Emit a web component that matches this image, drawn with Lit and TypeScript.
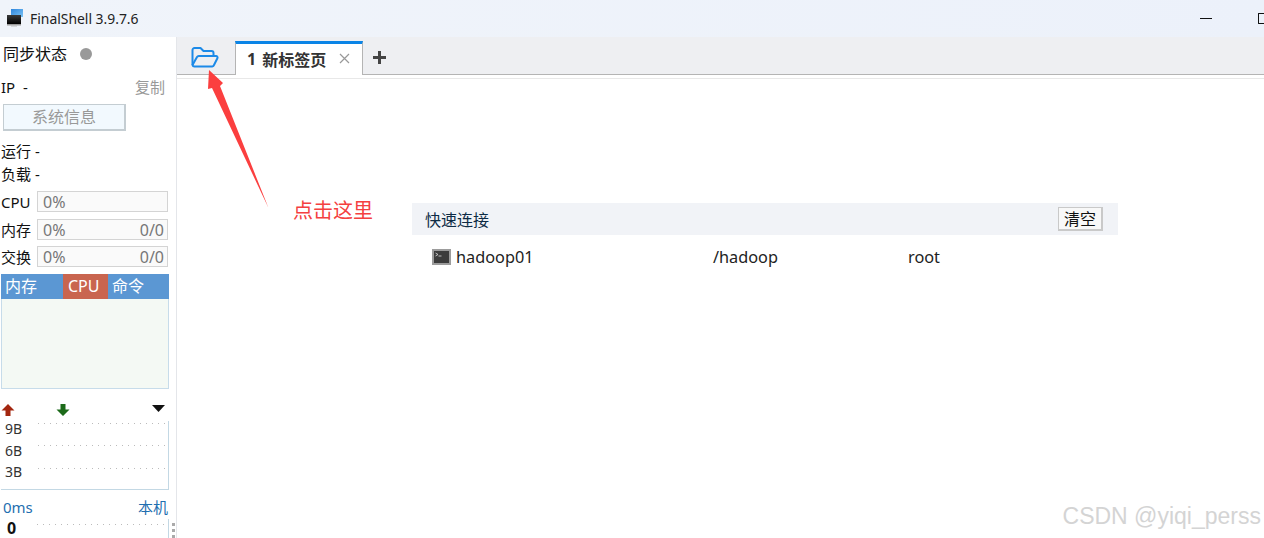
import { LitElement, html, css, svg } from "lit";
import { customElement } from "lit/decorators.js";

@customElement("app-root")
export class AppRoot extends LitElement {
  static styles = css`
    :host { display: block; width: 1264px; height: 538px; overflow: hidden; position: relative; background: #fff; font-family: "Noto Sans", "Noto Sans CJK SC", sans-serif; color: #111; font-size: 15px; }
    .title { height: 37px; background: linear-gradient(90deg, #f0f4fa, #ecf1fa); display: flex; align-items: center; padding-left: 6px; box-sizing: border-box; }
    .logo { width: 18px; height: 19px; margin-right: 6px; }
    .title-text { font-size: 13.9px; color: #222; }
    .spacer { flex: 1; }
    .min { width: 12px; height: 1px; background: #111; margin-right: 46px; margin-top: -1px; }
    .max { width: 6px; height: 11px; border: 1px solid #111; border-right: 0; border-radius: 1px 0 0 1px; box-sizing: border-box; }
    .body { display: flex; height: 501px; }
    .side { width: 177px; box-sizing: border-box; border-right: 1px solid #e4e6ea; position: relative; flex: none; }
    .row { display: flex; align-items: center; padding-left: 1px; line-height: 20px; height: 20px; }
    .sync { padding-left: 3px; margin-top: 7px; font-size: 16px; }
    .dot { width: 12px; height: 12px; border-radius: 50%; background: #999; margin-left: 13px; }
    .ip { margin-top: 13px; width: 164px; justify-content: space-between; }
    .gray { color: #999; }
    .sysbtn { display: block; margin: 7px 0 0 3px; width: 123px; height: 27px; box-sizing: border-box; border: 1px solid #c4cdd2; border-width: 1px 2px 2px 1px; background: #f2f9fe; color: #999; text-align: center; line-height: 24px; font-size: 16px; }
    .r1 { margin-top: 10px; }
    .r2 { margin-top: 3px; }
    .meter { display: flex; padding-left: 1px; margin-top: 7px; height: 21px; align-items: center; }
    .meter > span:first-child { width: 36px; flex: none; }
    .meter.third { margin-top: 6px; }
    .bar { width: 131px; height: 21px; box-sizing: border-box; border: 1px solid #d4d4d4; background: #fafafa; color: #777; display: flex; justify-content: space-between; padding: 0 3px 0 5px; line-height: 21px; font-size: 16px; }
    .tabs3 { margin: 7px 0 0 1px; width: 168px; height: 25px; background: #5b97d3; display: flex; color: #fff; line-height: 25px; font-size: 16px; }
    .tabs3 span { box-sizing: border-box; padding-left: 4px; }
    .t1 { width: 62px; }
    .t2 { width: 45px; background: #c9654f; padding-left: 5px !important; }
    .panel { margin-left: 1px; width: 168px; height: 90px; box-sizing: border-box; background: #f4f9f4; border: 1px solid #c7dcea; border-top: 0; }
    .arrows { display: flex; align-items: center; height: 14px; margin-top: 14px; padding-left: 1px; width: 164px; }
    .arrows svg { display: block; }
    .down { margin-left: 41px; }
    .tri { margin-left: auto; margin-top: -4px; }
    .net { margin-left: 1px; margin-top: 4px; width: 168px; height: 69px; box-sizing: border-box; border: 1px solid #c3d8e4; border-left: 0; border-top: 0; display: grid; grid-template-rows: 22px 23px 23px; padding-top: 1px; }
    .net .l { display: flex; font-size: 14px; color: #333; align-items: flex-start; padding-left: 4px; height: 100%; }
    .net .l b { font-weight: 400; width: 33px; flex: none; line-height: 15px; margin-top: -1px; }
    .net .l:last-child b { margin-top: -3px; }
    .net .l i { flex: 1; height: 1px; margin-top: 1px; margin-right: 3px; background: repeating-linear-gradient(90deg, #bbb 0 1px, transparent 1px 6px); }
    .ping { display: flex; justify-content: space-between; width: 168px; margin-top: 8px; padding-left: 3px; box-sizing: border-box; color: #1f6fb0; height: 19px; line-height: 19px; }
    .last { display: flex; margin-left: 1px; width: 168px; height: 20px; box-sizing: border-box; border-right: 1px solid #c3d8e4; padding-left: 6px; margin-top: 2px; }
    .last b { font-size: 16px; width: 30px; flex: none; line-height: 18px; color: #111; }
    .last i { flex: 1; height: 1px; margin-top: 5px; margin-right: 3px; background: repeating-linear-gradient(90deg, #bbb 0 1px, transparent 1px 6px); }
    .handle { position: absolute; left: 172px; bottom: 0; display: flex; flex-direction: column; gap: 3px; }
    .handle span { width: 3px; height: 3px; background: #aaa; }
    .main { flex: 1; display: flex; flex-direction: column; }
    .tabbar { height: 38px; background: #eeeff2; border-bottom: 1px solid #b4b4b4; box-sizing: border-box; display: flex; align-items: flex-end; flex: none; }
    .open { width: 58px; height: 37px; box-sizing: border-box; padding: 10px 0 0 14px; flex: none; }
    .tab { width: 128px; height: 34px; margin-bottom: -1px; box-sizing: border-box; background: #fff; border-top: 3px solid #0a84e6; border-left: 1px solid #b4b4b4; border-right: 1px solid #b4b4b4; display: flex; align-items: center; padding: 0 0 2px 11px; font-weight: 700; font-size: 16px; color: #333; }
    .tab .n { margin-right: 6px; }
    .tab .x { margin-left: 13px; width: 11px; height: 11px; }
    .plus { margin-left: 10px; width: 13px; height: 13px; margin-bottom: 10px; }
    .sep { height: 1px; margin-top: 3px; background: #e8e8e8; flex: none; }
    .quick { margin: 124px 0 0 235px; width: 706px; height: 32px; background: #f1f3f7; display: flex; align-items: center; justify-content: space-between; padding: 0 15px 0 13px; box-sizing: border-box; color: #0d2b45; font-size: 16px; }
    .quick > span:first-child { margin-top: -1px; }
    .clear { width: 45px; height: 24px; box-sizing: border-box; border: 1px solid #c9c9c9; border-width: 1px 2px 2px 1px; background: #f8f8f8; color: #111; font-size: 16px; text-align: center; line-height: 23px; }
    .conn { margin: 11px 0 0 255px; display: flex; align-items: center; height: 22px; font-size: 16.3px; color: #222; }
    .conn svg { margin-right: 5px; flex: none; }
    .c1 { width: 257px; }
    .c2 { width: 195px; }
    .over { position: absolute; left: 0; top: 0; pointer-events: none; }
    .note { position: absolute; left: 293px; top: 197px; color: #f44040; font-size: 20px; line-height: 28px; }
    .wm { position: absolute; right: 3px; top: 502px; font-family: "Liberation Sans", sans-serif; font-size: 23px; line-height: 28px; color: #d4d4d4; }
  `;

  private line(label: string) {
    return html`<div class="l"><b>${label}</b><i></i></div>`;
  }

  render() {
    return html`
      <div class="title">
        <svg class="logo" viewBox="0 0 18 19">
          <defs>
            <linearGradient id="lb" x1="0" y1="0" x2="1" y2="1"><stop offset="0" stop-color="#2f86dc"/><stop offset="1" stop-color="#7cc4f5"/></linearGradient>
            <linearGradient id="lk" x1="0" y1="0" x2="0" y2="1"><stop offset="0" stop-color="#3a3a3a"/><stop offset="1" stop-color="#000"/></linearGradient>
          </defs>
          <rect x="5" y="0" width="12" height="8" fill="url(#lb)"/>
          <rect x="1" y="6" width="14" height="9" fill="url(#lk)"/>
          <rect x="1" y="15" width="14" height="1.500" fill="#9a9a9a"/>
          <rect x="5" y="16.500" width="6" height="1" fill="#bbb"/>
        </svg>
        <span class="title-text">FinalShell 3.9.7.6</span>
        <span class="spacer"></span>
        <span class="min"></span>
        <span class="max"></span>
      </div>
      <div class="body">
        <aside class="side">
          <div class="row sync">同步状态<span class="dot"></span></div>
          <div class="row ip"><span>IP&nbsp; -</span><span class="gray">复制</span></div>
          <div class="sysbtn">系统信息</div>
          <div class="row r1">运行 -</div>
          <div class="row r2">负载 -</div>
          <div class="meter"><span>CPU</span><div class="bar"><span>0%</span></div></div>
          <div class="meter"><span>内存</span><div class="bar"><span>0%</span><span>0/0</span></div></div>
          <div class="meter third"><span>交换</span><div class="bar"><span>0%</span><span>0/0</span></div></div>
          <div class="tabs3"><span class="t1">内存</span><span class="t2">CPU</span><span>命令</span></div>
          <div class="panel"></div>
          <div class="arrows">
            <svg width="14" height="12" viewBox="0 0 14 12"><path d="M7 0L13.500 6.500H9.500V12H4.500V6.500H0.500Z" fill="#a3260f"/></svg>
            <svg class="down" width="14" height="12" viewBox="0 0 14 12"><path d="M7 12L13.500 5.500H9.500V0H4.500V5.500H0.500Z" fill="#1c6a1a"/></svg>
            <svg class="tri" width="13" height="7" viewBox="0 0 13 7"><path d="M0 0H13L6.500 7Z" fill="#111"/></svg>
          </div>
          <div class="net">${this.line("9B")}${this.line("6B")}${this.line("3B")}</div>
          <div class="ping"><span>0ms</span><span>本机</span></div>
          <div class="last"><b>0</b><i></i></div>
          <div class="handle"><span></span><span></span><span></span></div>
        </aside>
        <main class="main">
          <div class="tabbar">
            <div class="open">
              <svg width="28" height="21" viewBox="0 0 28 21" fill="none" stroke="#1c8ae8" stroke-width="2" stroke-linejoin="round">
                <path d="M1.500 18V3a2 2 0 0 1 2-2h6l3 3h8a2 2 0 0 1 2 2v3"/>
                <path d="M1.500 18l4.500-8a2 2 0 0 1 1.800-1H25a1.500 1.500 0 0 1 1.400 2.200L23 18a2 2 0 0 1-1.800 1.500H3.500a2 2 0 0 1-2-1.500z"/>
              </svg>
            </div>
            <div class="tab"><span class="n">1</span>新标签页
              <svg class="x" viewBox="0 0 11 11" stroke="#999" stroke-width="1.200"><path d="M1 1L10 10M10 1L1 10"/></svg>
            </div>
            <svg class="plus" viewBox="0 0 13 13"><path d="M5 0H8V5H13V8H8V13H5V8H0V5H5Z" fill="#444"/></svg>
          </div>
          <div class="sep"></div>
          <div class="quick"><span>快速连接</span><span class="clear">清空</span></div>
          <div class="conn">
            <svg width="19" height="16" viewBox="0 0 19 16">
              <rect x="1" y="1" width="17" height="14" fill="#3c3c3c" stroke="#9c9c9c" stroke-width="2"/>
              <path d="M3.500 4L6 5.500L3.500 7M6.500 7H9.500" stroke="#ddd" stroke-width="0.800" fill="none"/>
            </svg>
            <span class="c1">hadoop01</span><span class="c2">/hadoop</span><span>root</span>
          </div>
        </main>
      </div>
      <svg class="over" width="1264" height="538">
        ${svg`<polygon points="209,70 223,83 220,86 268.500,208 212,88 208,89" fill="#fb3f3f"/>`}
      </svg>
      <div class="note">点击这里</div>
      <div class="wm">CSDN @yiqi_perss</div>
    `;
  }
}
